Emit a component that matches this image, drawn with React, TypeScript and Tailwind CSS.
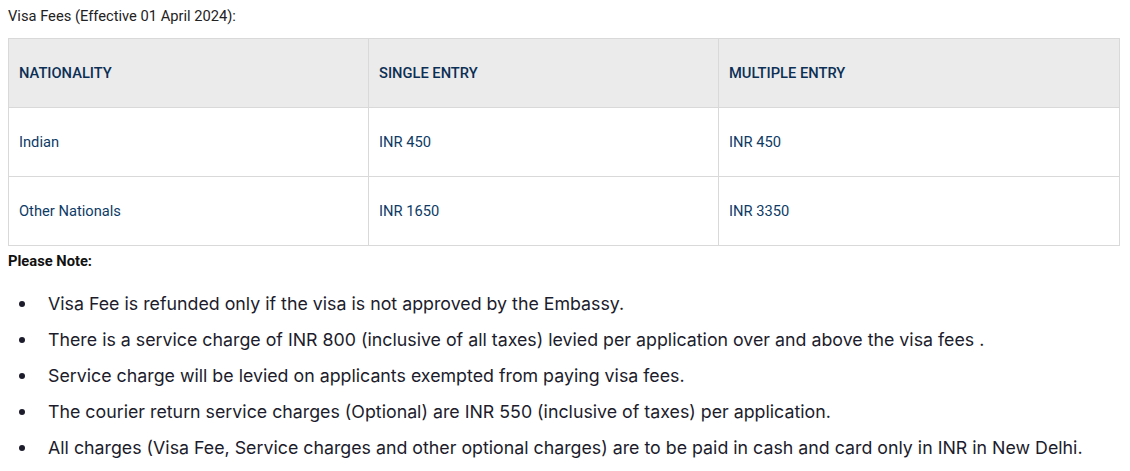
import React from "react";

const rows = [
  ["Indian", "INR 450", "INR 450"],
  ["Other Nationals", "INR 1650", "INR 3350"],
];

const notes = [
  "Visa Fee is refunded only if the visa is not approved by the Embassy.",
  "There is a service charge of INR 800 (inclusive of all taxes) levied per application over and above the visa fees .",
  "Service charge will be levied on applicants exempted from paying visa fees.",
  "The courier return service charges (Optional) are INR 550 (inclusive of taxes) per application.",
  "All charges (Visa Fee, Service charges and other optional charges) are to be paid in cash and card only in INR in New Delhi.",
];

export default function App() {
  return (
    <div className="bg-white w-[1130px] h-[471px] overflow-hidden font-['Roboto',sans-serif]">
      <p className="pl-[8px] pt-[6px] text-[14.7px] leading-[20px] text-[#222222]">Visa Fees (Effective 01 April 2024):</p>
      <table className="ml-[8px] mt-[12px] w-[1112px] border-collapse table-fixed text-[14.7px]">
        <colgroup>
          <col className="w-[360px]" />
          <col className="w-[350px]" />
          <col />
        </colgroup>
        <thead>
          <tr className="bg-[#ebebeb] h-[69px]">
            {["NATIONALITY", "SINGLE ENTRY", "MULTIPLE ENTRY"].map((h) => (
              <th key={h} className="border border-[#d9d9d9] px-[10px] text-left font-medium text-[#0c2f55]">{h}</th>
            ))}
          </tr>
        </thead>
        <tbody>
          {rows.map((r) => (
            <tr key={r[0]} className="h-[69px]">
              {r.map((c, i) => (
                <td key={i} className="border border-[#d9d9d9] px-[10px] text-[#0d3b66]">{c}</td>
              ))}
            </tr>
          ))}
        </tbody>
      </table>
      <p className="pl-[8px] pt-[5px] text-[14.7px] leading-[20px] font-bold text-[#111111]">Please Note:</p>
      <ul className="mt-[21px] flex flex-col gap-[12px] font-['Inter',sans-serif]">
        {notes.map((n) => (
          <li key={n} className="flex items-center text-[17.8px] leading-[24px] text-[#1c1c2c]">
            <span className="w-[48px] pl-[19px] shrink-0 flex items-center">
              <span className="w-[6px] h-[6px] rounded-full bg-[#1c1c2c]" />
            </span>
            {n}
          </li>
        ))}
      </ul>
    </div>
  );
}
